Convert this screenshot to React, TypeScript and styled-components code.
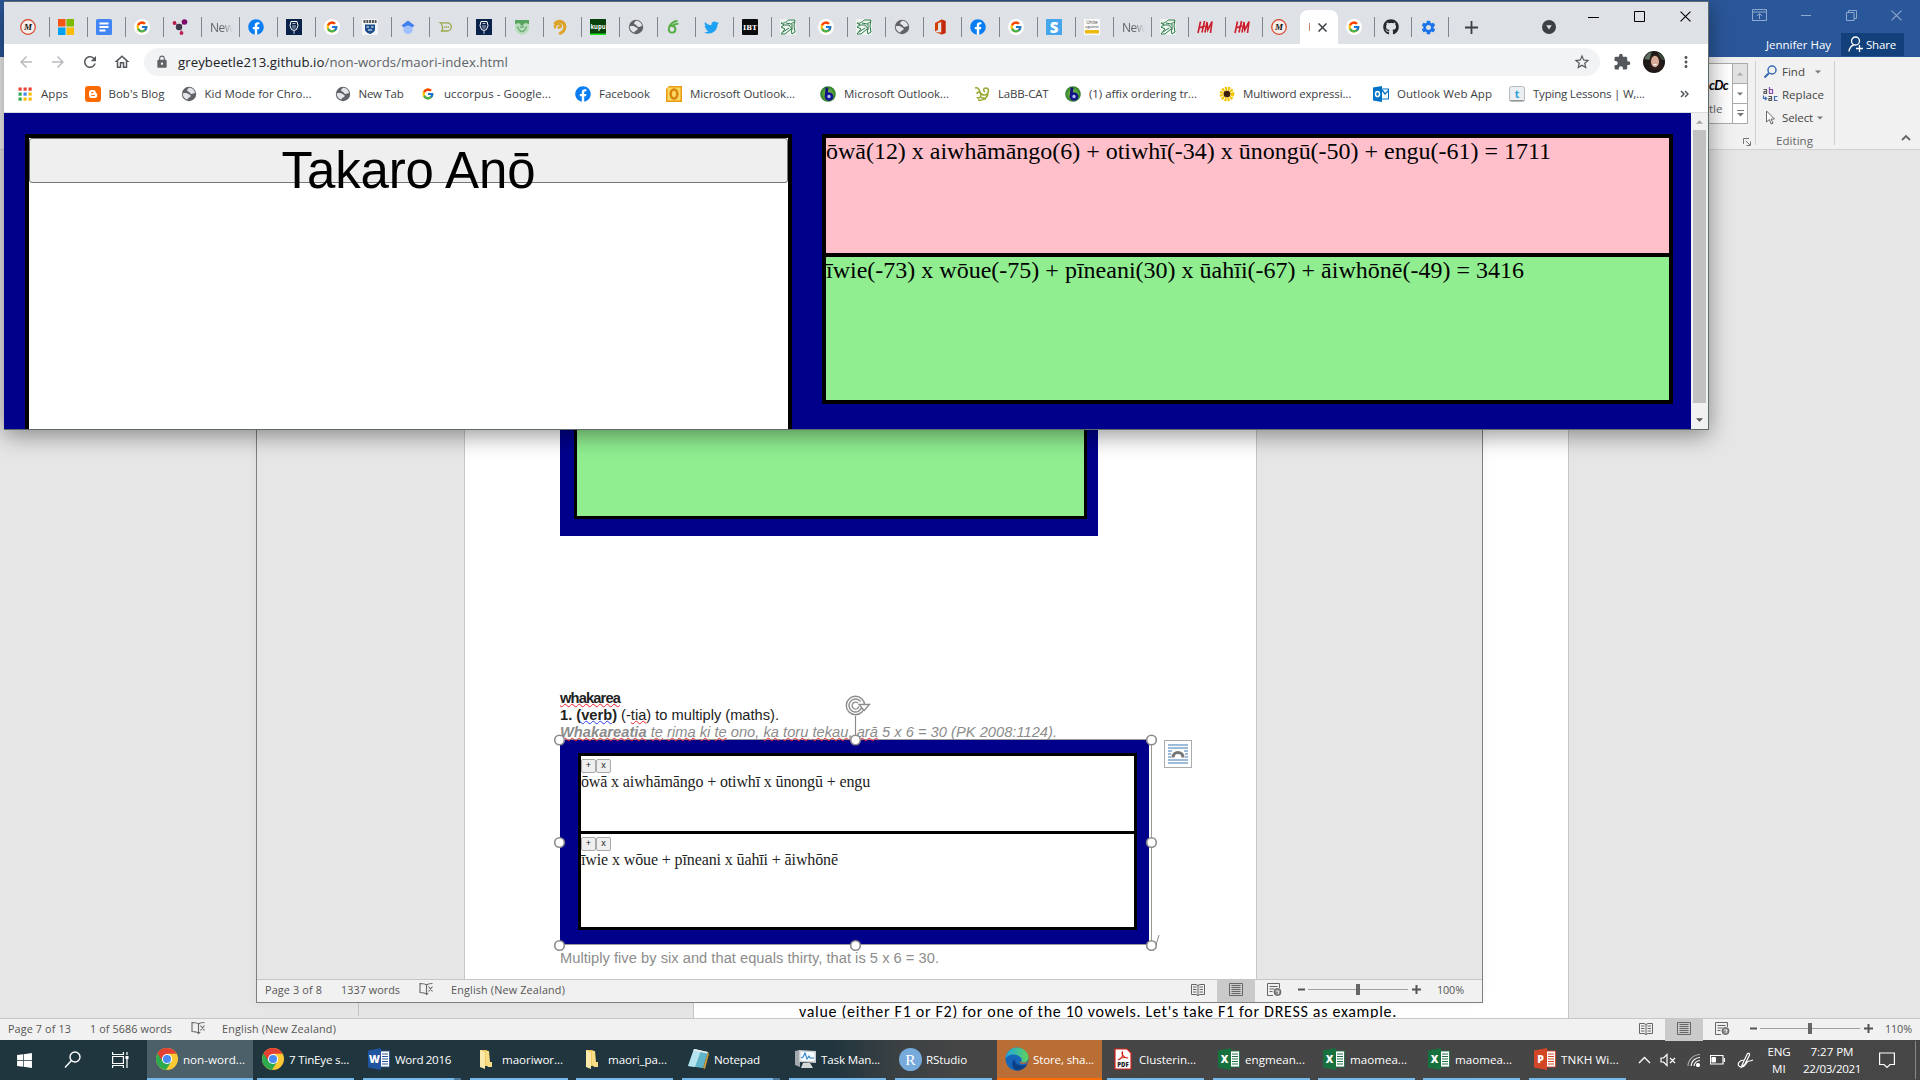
import React, { useLayoutEffect, useRef, useState } from "react";
import styled, { createGlobalStyle } from "styled-components";
import { FcGoogle } from "react-icons/fc";
import { FaFacebook, FaTwitter, FaGithub, FaWindows } from "react-icons/fa";
import {
  MdArrowBack, MdArrowForward, MdRefresh, MdOutlineHome, MdLock,
  MdStarBorder, MdExtension, MdMoreVert, MdSettings,
} from "react-icons/md";

const Global = createGlobalStyle`
  * { box-sizing: border-box; }
  html, body { margin: 0; padding: 0; overflow: hidden; }
  body { font-family: "Segoe UI", "Open Sans", "Noto Sans", sans-serif; }
  svg { display: block; flex: none; }
`;

/* ---------- text that keeps a given advance width ---------- */
const FitSpan = styled.span`
  display: inline-block;
  flex: none;
  white-space: pre;
`;
function Fit({ w, children }: { w: number; children: React.ReactNode }) {
  const ref = useRef<HTMLSpanElement>(null);
  const [ls, setLs] = useState(0);
  useLayoutEffect(() => {
    const el = ref.current;
    if (!el) return;
    const n = (el.textContent || "").length;
    setLs((w - el.getBoundingClientRect().width) / Math.max(1, n));
  }, [w]);
  return <FitSpan ref={ref} style={{ letterSpacing: `${ls}px` }}>{children}</FitSpan>;
}

/* ---------- desktop ---------- */
const Desktop = styled.div`
  position: relative;
  width: 1920px;
  height: 1080px;
  overflow: hidden;
  background: #e6e6e6;
`;
const Row = styled.div`
  display: flex;
  align-items: center;
`;
const Gap = styled.div<{ $w?: number; $h?: number }>`
  flex: none;
  width: ${(p) => p.$w ?? 0}px;
  height: ${(p) => p.$h ?? 0}px;
`;

/* ---------- main Word window ---------- */
const WordWindow = styled.div`
  display: flex;
  flex-direction: column;
  width: 1920px;
  height: 1040px;
`;
const TitleArea = styled.div`
  flex: none;
  height: 57px;
  background: #2a579a;
  display: flex;
  flex-direction: column;
  align-items: flex-end;
`;
const TitleControls = styled.div`
  display: flex;
  align-items: center;
  height: 30px;
  gap: 34px;
  padding-right: 18px;
`;
const AccountRow = styled.div`
  display: flex;
  align-items: center;
  height: 24px;
  margin-top: 2px;
  padding: 0 16px 0 0;
  gap: 10px;
  color: #fff;
  font-size: 11.5px;
`;
const ShareButton = styled.div`
  display: flex;
  align-items: center;
  gap: 3px;
  width: 63px;
  height: 23px;
  padding-left: 7px;
  background: #12407a;
`;
const Ribbon = styled.div`
  flex: none;
  height: 93px;
  background: #f1f1f1;
  border-bottom: 1px solid #d2d2d2;
  display: flex;
  justify-content: flex-end;
  padding-top: 4px;
  color: #444;
  font-size: 11.5px;
`;
const Gallery = styled.div`
  width: 41px;
  height: 61px;
  margin-top: 2px;
  border: 1px solid #ababab;
  border-left: 0;
  background: #fff;
  display: flex;
`;
const GalleryPreview = styled.div`
  width: 25px;
  padding: 10px 0 0 2px;
  color: #000;
  line-height: 22px;
  & > i { display: block; font: italic bold 13px/22px Lato, sans-serif; letter-spacing: -0.6px; }
  & > span { display: block; color: #666; line-height: 26px; }
`;
const GalleryScroll = styled.div`
  width: 15px;
  border-left: 1px solid #ababab;
  display: flex;
  flex-direction: column;
`;
const ScrollCell = styled.div<{ $off?: boolean }>`
  flex: 1;
  display: flex;
  align-items: center;
  justify-content: center;
  background: ${(p) => (p.$off ? "#e1e1e1" : "#fff")};
  border-bottom: 1px solid #ababab;
  &:last-child { border-bottom: 0; }
`;
const GalleryGroup = styled.div`
  display: flex;
  flex-direction: column;
  align-items: flex-end;
  width: 50px;
  padding-right: 7px;
`;
const Launcher = styled.div`
  margin: 14px -3px 0 0;
`;
const EditGroup = styled.div`
  width: 80px;
  height: 84px;
  border-left: 1px solid #d0d0d0;
  border-right: 1px solid #d0d0d0;
  padding: 0 0 0 6px;
`;
const EditItem = styled.div`
  display: flex;
  align-items: center;
  height: 23px;
  gap: 4px;
  padding-bottom: 2px;
`;
const EditLabel = styled.div`
  padding-left: 14px;
  line-height: 22px;
  color: #666;
`;
const RibbonEnd = styled.div`
  width: 85px;
  padding: 73px 0 0 66px;
`;
const WordBody = styled.div`
  flex: 1;
  min-height: 0;
  display: flex;
  background: #e6e6e6;
`;
const RulerEdge = styled.div`
  width: 359px;
  height: 866px;
  border-right: 1px solid #c3c3c3;
`;
const BackPage = styled.div`
  margin-left: 334px;
  width: 876px;
  height: 868px;
  background: #fff;
  border: 1px solid #c6c6c6;
  border-top: 0;
  border-bottom: 0;
  display: flex;
  align-items: flex-end;
  overflow: hidden;
  padding-left: 105px;
  font: 16px/18px Carlito, Lato, sans-serif;
  color: #000;
  & > span { margin-bottom: -3px; }
`;
const StatusBar = styled.div<{ $inner?: boolean }>`
  flex: none;
  display: flex;
  align-items: center;
  height: ${(p) => (p.$inner ? 23 : 22)}px;
  padding-left: 8px;
  background: #f1f1f1;
  border-top: 1px solid #c6c6c6;
  color: #555;
  font-size: 10.8px;
  padding-bottom: ${(p) => (p.$inner ? 4 : 3)}px;
`;
const ViewIcon = styled.div<{ $on?: boolean }>`
  width: 38px;
  height: 22px;
  margin-bottom: -3px;
  padding-bottom: 2px;
  display: flex;
  align-items: center;
  justify-content: center;
  background: ${(p) => (p.$on ? "#cacaca" : "transparent")};
`;
const Spring = styled.div`
  flex: 1;
`;

/* ---------- inner Word window ---------- */
const InnerWindow = styled.div`
  position: absolute;
  left: 256px;
  top: 149px;
  width: 1227px;
  height: 854px;
  border: 1px solid #7f7f7f;
  background: #e6e6e6;
  display: flex;
  flex-direction: column;
  overflow: hidden;
  box-shadow: 0 0 9px rgba(0, 0, 0, 0.05);
`;
const InnerBody = styled.div`
  flex: 1;
  min-height: 0;
  overflow: hidden;
`;
const Page = styled.div`
  margin-left: 207px;
  width: 793px;
  height: 100%;
  background: #fff;
  border: 1px solid #c6c6c6;
  border-top: 0;
  border-bottom: 0;
  padding-left: 95px;
  display: flex;
  flex-direction: column;
  align-items: flex-start;
  font: 14.67px/17px "Liberation Sans", Arial, sans-serif;
  color: #222;
`;
const FirstPicture = styled.div`
  flex: none;
  width: 538px;
  height: 386px;
  background: #00008b;
  padding: 0 11px 17px 14px;
  display: flex;
  & > div {
    flex: 1;
    background: #90ee90;
    border: 3px solid #000;
  }
`;
const DocLine = styled.div<{ $c?: string; $i?: boolean }>`
  position: relative;
  z-index: 1;
  height: 17px;
  white-space: nowrap;
  color: ${(p) => p.$c || "#222"};
  font-style: ${(p) => (p.$i ? "italic" : "normal")};
`;
const Squiggle = styled.span<{ $c?: string }>`
  text-decoration: underline wavy ${(p) => p.$c || "#f0202c"} 1px;
  text-decoration-skip-ink: none;
  text-underline-offset: 0;
`;
const PictureFrame = styled.div`
  position: relative;
  flex: none;
  width: 592px;
  height: 206px;
  margin-top: -2px;
  border: 1px solid #9a9a9a;
  border-left-width: 0;
  padding-right: 2px;
`;
const Picture = styled.div`
  width: 589px;
  height: 204px;
  background: #00008b;
  padding: 13px 12px 15px 18px;
`;
const Sheet = styled.div`
  width: 559px;
  height: 177px;
  border: 3px solid #000;
  background: #fff;
  color: #222;
  font: 16px/18px "Liberation Serif", "Times New Roman", serif;
`;
const SheetCell = styled.div<{ $h: number; $last?: boolean }>`
  height: ${(p) => p.$h}px;
  padding-top: 3px;
  border-bottom: ${(p) => (p.$last ? 0 : 3)}px solid #000;
`;
const TinyButton = styled.span`
  width: 15px;
  height: 14px;
  border: 1px solid #a9a9a9;
  border-radius: 2px;
  background: #efefef;
  font: 9px/11px "Liberation Sans", Arial, sans-serif;
  text-align: center;
`;
const HandleLayer = styled.svg`
  position: absolute;
  left: -8px;
  top: -48px;
  z-index: 2;
  overflow: visible;
`;
const LayoutBadge = styled.div`
  position: absolute;
  left: 604px;
  top: 0;
  width: 28px;
  height: 28px;
  border: 1px solid #ababab;
  background: #fff;
  display: flex;
  align-items: center;
  justify-content: center;
`;

/* ---------- Chrome ---------- */
const ChromeWindow = styled.div`
  position: absolute;
  z-index: 5;
  left: 4px;
  top: 1px;
  width: 1705px;
  height: 429px;
  border: 1px solid #5f6a6a;
  border-left-width: 0;
  background: #fff;
  box-shadow: 0 5px 22px rgba(0, 0, 0, 0.42);
  display: flex;
  flex-direction: column;
  color: #3c4043;
`;
const TabStrip = styled.div`
  flex: none;
  display: flex;
  height: 42px;
  padding: 8px 0 0 8px;
  background: #dee1e6;
`;
const Tab = styled.div<{ $w: number; $sep?: boolean }>`
  flex: none;
  width: ${(p) => p.$w}px;
  height: 34px;
  display: flex;
  align-items: center;
  padding-left: 8px;
  font-size: 12px;
  color: #5f6368;
  background: ${(p) => (p.$sep === false ? "none" : "linear-gradient(#80868b, #80868b) right 7px / 1px 20px no-repeat")};
`;
const NewText = styled.span`
  letter-spacing: -0.5px;
  mask-image: linear-gradient(90deg, #000 50%, transparent 95%);
`;
const ActiveTab = styled.div`
  flex: none;
  width: 38px;
  height: 34px;
  display: flex;
  align-items: center;
  gap: 8px;
  padding-left: 9px;
  background: #fff;
  border-radius: 8px 8px 0 0;
`;
const TitleSliver = styled.span`
  width: 1px;
  height: 8px;
  background: #c98a6a;
`;
const WindowButtons = styled.div`
  display: flex;
  gap: 35px;
  margin: -3px 0 0 32px;
  height: 18px;
  align-items: center;
`;
const Toolbar = styled.div`
  flex: none;
  display: flex;
  align-items: center;
  height: 36px;
  padding-left: 13px;
`;
const NavIcon = styled.span<{ $off?: boolean }>`
  flex: none;
  width: 32px;
  color: ${(p) => (p.$off ? "#b8babd" : "#54585c")};
  & svg { width: 18px; height: 18px; }
`;
const Omnibox = styled.div`
  flex: none;
  display: flex;
  align-items: center;
  width: 1456px;
  height: 28px;
  margin-left: -1px;
  padding: 0 9px 1px 11px;
  border-radius: 14px;
  background: #f1f3f4;
  color: #5f6368;
  font-size: 13.2px;
  & b { font-weight: 400; color: #202124; }
`;
const ToolIcons = styled.div`
  display: flex;
  align-items: center;
  margin-left: 13px;
  gap: 12px;
  color: #54585c;
`;
const Bookmarks = styled.div`
  flex: none;
  display: flex;
  height: 33px;
  padding: 0 0 5px 13px;
  border-bottom: 1px solid #dadce0;
  font-size: 11.5px;
  color: #3c4043;
`;
const Bookmark = styled.div<{ $w: number }>`
  flex: none;
  width: ${(p) => p.$w}px;
  display: flex;
  align-items: center;
  gap: 8px;
`;
const Viewport = styled.div`
  flex: 1;
  min-height: 0;
  display: flex;
  background: #00008b;
  overflow: hidden;
`;
const GamePanel = styled.div`
  flex: none;
  width: 767px;
  height: 400px;
  margin: 21px 0 0 21px;
  border: 4px solid #000;
  background: #fff;
`;
const PlayAgain = styled.div`
  height: 45px;
  border: 1px solid #767676;
  border-radius: 3px;
  background: #efefef;
  color: #000;
  text-align: center;
  font: 51px/63px "Liberation Sans", Arial, sans-serif;
`;
const ScorePanel = styled.div`
  flex: none;
  width: 851px;
  height: 270px;
  margin: 21px 18px 0 30px;
  border: 4px solid #000;
  font: 24px/27px "Liberation Serif", "Times New Roman", serif;
  color: #000;
`;
const Score = styled.div<{ $ok?: boolean }>`
  height: ${(p) => (p.$ok ? 143 : 119)}px;
  background: ${(p) => (p.$ok ? "#90ee90" : "#ffc0cb")};
  border-bottom: ${(p) => (p.$ok ? 0 : 4)}px solid #000;
`;
const ScrollBar = styled.div`
  width: 17px;
  background: #f1f1f1;
  display: flex;
  flex-direction: column;
  align-items: center;
  padding-top: 7px;
`;
const Thumb = styled.div`
  width: 13px;
  height: 273px;
  margin: 6px 0 15px;
  background: #c1c1c1;
`;

/* ---------- taskbar ---------- */
const Taskbar = styled.div`
  display: flex;
  width: 1920px;
  height: 40px;
  background: linear-gradient(90deg, #20363f 0, #20353e 830px, #3c4143 900px, #454545 960px, #464646 1920px);
  color: #fff;
  font-size: 11.6px;
`;
const StartArea = styled.div`
  flex: none;
  display: flex;
  align-items: center;
  width: 147px;
  padding-left: 16px;
  gap: 31px;
`;
const Task = styled.div<{ $w: number; $ml: number; $pad: number; $bg?: string; $line?: string; $stack?: boolean }>`
  flex: none;
  display: flex;
  align-items: center;
  gap: 5px;
  width: ${(p) => p.$w}px;
  height: 40px;
  margin-left: ${(p) => p.$ml}px;
  padding-left: ${(p) => p.$pad}px;
  background: ${(p) => p.$bg || "transparent"};
  border-bottom: 2px solid ${(p) => p.$line || "#76b9ed"};
  ${(p) => p.$stack && "border-image: linear-gradient(90deg, #76b9ed calc(100% - 9px), #4c7ba0 calc(100% - 9px)) 2;"}
  white-space: nowrap;
`;
const TaskIcon = styled.span`
  flex: none;
  width: 22px;
  display: flex;
  justify-content: center;
`;
const Tray = styled.div`
  flex: none;
  display: flex;
  align-items: center;
  margin-left: 12px;
`;
const TrayStack = styled.div<{ $w: number }>`
  width: ${(p) => p.$w}px;
  display: flex;
  flex-direction: column;
  align-items: center;
  line-height: 17px;
  padding-bottom: 1px;
`;
const ShowDesktop = styled.div`
  width: 5px;
  height: 38px;
  margin-left: 20px;
  border-left: 1px solid #888;
`;

/* ---------- icons ---------- */
const Caret = ({ c = "#777", up = false, s = 7 }) => (
  <svg width={s} height={4} viewBox="0 0 8 4"><path d={up ? "M0 4L4 0L8 4z" : "M0 0L4 4L8 0z"} fill={c} /></svg>
);
const GFav = () => (
  <svg width="16" height="16" viewBox="0 0 16 16"><circle cx="8" cy="8" r="8" fill="#fff" /><FcGoogle x="1.5" y="1.5" size={13} /></svg>
);
const FbFav = () => (
  <svg width="16" height="16" viewBox="0 0 16 16"><circle cx="8" cy="8" r="7.5" fill="#fff" /><FaFacebook size={16} color="#0a7df2" /></svg>
);
const Globe = () => (
  <svg width="16" height="16" viewBox="0 0 16 16">
    <circle cx="8" cy="8" r="7.2" fill="#5f6368" />
    <path d="M1.800 7.200c2-.2 4.400-.6 5.200.6s2.800.4 2.600 2.200-2.600 1-3.200 3.600C3.600 13 1.500 10 1.800 7.200zM8.200 1.800c3 0 5.400 2.200 5.800 5.200-2 .4-2.600 1.400-4.200.7s-.8-2-2.600-2.200-1-2.900 1-3.700z" fill="#e4e6ea" />
  </svg>
);
const MStuff = () => (
  <svg width="16" height="16" viewBox="0 0 16 16"><circle cx="8" cy="8" r="7.3" fill="#f4eeea" stroke="#d8442a" strokeWidth="1.2" />
    <text x="8" y="11.2" textAnchor="middle" fontFamily="Liberation Serif" fontStyle="italic" fontWeight="700" fontSize="9" fill="#111">M</text></svg>
);
const MsLogo = () => (
  <svg width="16" height="16"><path d="M0 0h7.500v7.500H0z" fill="#f65314" /><path d="M8.500 0H16v7.500H8.500z" fill="#7cbb00" /><path d="M0 8.500h7.500V16H0z" fill="#00a1f1" /><path d="M8.500 8.500H16V16H8.500z" fill="#ffbb00" /></svg>
);
const Docs = () => (
  <svg width="16" height="16"><rect width="16" height="16" rx="1.5" fill="#4285f4" /><path d="M3.500 4.500h9M3.500 8h9M3.500 11.500h6" stroke="#fff" strokeWidth="1.8" /></svg>
);
const Molecule = () => (
  <svg width="16" height="16"><path d="M3 4l5 4 4-5M8 8l2 6" stroke="#8a4a7a" strokeWidth=".8" fill="none" /><circle cx="7" cy="8" r="3.2" fill="#3c3a4c" /><circle cx="12.5" cy="3" r="2.8" fill="#7c0a6c" /><circle cx="2.5" cy="4" r="1.9" fill="#b51a4a" /><circle cx="9.5" cy="14" r="1.9" fill="#c02050" /></svg>
);
const Crest = () => (
  <svg width="16" height="16"><rect width="16" height="16" fill="#08224a" /><path d="M5 2.500h6l1 4-1.500 4-2.500 1-2.500-1L4 6.500z" fill="none" stroke="#fff" /><path d="M6.500 4.500h3M6 7h4M6.500 9h3M8 11v4" stroke="#cdd5e2" strokeWidth=".9" /></svg>
);
const Shield = () => (
  <svg width="16" height="16"><rect width="16" height="16" fill="#f3f4f6" /><path d="M1.500 2.500h13" stroke="#555" strokeWidth="3" strokeDasharray="2 .8" /><path d="M3 5.500h10v5c0 2-3 4-5 4.500-2-.5-5-2.500-5-4.500z" fill="#1d4f8c" /><path d="M4.500 8h2.500m2 0h2.500M6 11h4" stroke="#fff" strokeWidth="1.2" /></svg>
);
const Scholar = () => (
  <svg width="16" height="16"><circle cx="8" cy="10.5" r="4.6" fill="#a0c3ff" /><path d="M8 1.500L1.500 6.500 4 8.500a5 5 0 0 1 8 0l2.500-2z" fill="#3f7ff0" /></svg>
);
const Chat = () => (
  <svg width="16" height="16" fill="none" stroke="#9aa84a" strokeWidth="1.3"><path d="M2.500 3.800h6.500a4 3.800 0 0 1 0 8.200H3.500l1.200-2.500C4 7.500 4.500 5 2.500 3.800z" /><path d="M6 8h5" strokeDasharray="1.3 .6" /></svg>
);
const GreenShield = () => (
  <svg width="16" height="16"><path d="M1 1h14v8c0 4-4 6-7 7-3-1-7-3-7-7z" fill="#b9dcbc" /><path d="M1 1h14v4l-4-1-3 3-3-3-4 1z" fill="#56a45e" /><path d="M3.500 7.500c1 3 2.500 5 4.500 5s3.500-2 4.500-5M6 8h4" stroke="#6fae76" strokeWidth="1.4" fill="none" /></svg>
);
const Koru = () => (
  <svg width="16" height="16" fill="none" stroke="#dca326" strokeLinecap="round"><path d="M6.500 8.500C9 9 9.600 6 7.500 5.200 5 4.300 2.400 6 3 8.400" strokeWidth="2.4" /><path d="M3.200 4.200C6 .8 12.500 2 12.800 7.500c.1 3.500-2 5.800-4.600 6.800" strokeWidth="3" /></svg>
);
const Kupu = () => (
  <svg width="16" height="16"><rect width="16" height="16" fill="#06420a" /><rect y="14.5" width="16" height="1.5" fill="#1be51b" /><text x="8" y="10" fontSize="7" textLength="15" lengthAdjust="spacingAndGlyphs" fontWeight="700" textAnchor="middle" fontFamily="Open Sans" fill="#fff">kupu</text></svg>
);
const Overleaf = () => (
  <svg width="16" height="16" fill="none" stroke="#52ae43" strokeWidth="1.9"><path d="M11.500 2C8 2 2.800 5 2.800 10.500a3.300 3.300 0 1 0 3.300-3.500C8 5 9.500 4.800 12.500 4.600" /></svg>
);
const Ibt = () => (
  <svg width="16" height="16"><rect width="16" height="16" rx="1" fill="#0c0c0c" /><text x="8" y="11" textAnchor="middle" fontFamily="DejaVu Serif" fontWeight="700" fontSize="7" textLength="14" lengthAdjust="spacingAndGlyphs" fill="#fff">IBT</text></svg>
);
const Uc = () => (
  <svg width="16" height="16"><rect width="16" height="16" fill="#eef3ef" /><path d="M1 4c3 1 5-1 7-3h7l-1 6 1 6-3 2-1-5-6 5H1l4-5-4-2 3-2zM4 6l5 0 3 4M6 4l5 1 3-2M3 13l6-4M12 5v6" fill="none" stroke="#2e7d4a" strokeWidth="1" /></svg>
);
const Office = () => (
  <svg width="16" height="16"><path d="M3 4L9.500.5 13.500 2v12l-4 1.500-6-2.500 6 .5V3L6 4.200v6.600L3 12.500z" fill="#d83b01" /><path d="M9.500.5l4 1.500v12l-4 1.500z" fill="#c2280c" /></svg>
);
const SFav = () => (
  <svg width="16" height="16"><rect width="16" height="16" fill="#45a6ee" /><text x="8" y="13.5" textAnchor="middle" fontFamily="Open Sans" fontWeight="800" fontSize="15" fill="#fff">S</text></svg>
);
const Unite = () => (
  <svg width="16" height="16"><rect width="16" height="16" fill="#fafafa" /><text x="8" y="5" textAnchor="middle" fontFamily="Open Sans" fontSize="4.5" fill="#444">Unite</text><text x="8" y="9.3" textAnchor="middle" fontFamily="Open Sans" fontSize="4" fill="#333">against</text><rect x="1" y="11" width="14" height="3.5" fill="#ecb90f" /></svg>
);
const Hm = () => (
  <svg width="16" height="16" fill="none" stroke="#cc1b2a"><path d="M3.500 2.500L1 14M7.500 2L5 13.500M2 9l6-2M10 3L8 13.500M10 3l.8 8L15 2.500 13.500 14" strokeWidth="1.6" /></svg>
);
const AppsIcon = () => (
  <svg width="16" height="16" viewBox="0 0 16 16">
    {["#ea4335", "#ea4335", "#ea4335", "#34a853", "#4285f4", "#fbbc05", "#34a853", "#fbbc05", "#fbbc05"].map((c, i) => (
      <rect key={i} x={1.5 + (i % 3) * 5} y={1.5 + Math.floor(i / 3) * 5} width="3.2" height="3.2" fill={c} />
    ))}
  </svg>
);
const Blogger = () => (
  <svg width="16" height="16"><rect width="16" height="16" rx="3" fill="#ff6a00" /><path d="M4 6.500A2.500 2.500 0 0 1 6.500 4h1.800a2.500 2.500 0 0 1 2.500 2.500q0 .8.7.8.7 0 .7.9v1.300A2.500 2.500 0 0 1 9.700 12H6.500A2.500 2.500 0 0 1 4 9.500z" fill="#fff" /><path d="M6.300 6.600h2M6.300 9.500h3.500" stroke="#ff6a00" strokeWidth="1.2" /></svg>
);
const OldOutlook = () => (
  <svg width="16" height="16"><path d="M0 3l3-3h13v16H0z" fill="#e89a13" /><rect x="1.5" y="1.5" width="13" height="13" fill="#fbd864" /><ellipse cx="8" cy="8" rx="3.3" ry="4.5" fill="none" stroke="#d9850b" strokeWidth="2.6" /></svg>
);
const BFav = () => (
  <svg width="16" height="16"><defs><radialGradient id="bg"><stop offset="0" stopColor="#9be04a" /><stop offset="1" stopColor="#2b7a2c" /></radialGradient></defs><circle cx="8" cy="8" r="7.8" fill="url(#bg)" /><path d="M7 1.500L6 11" stroke="#14147c" strokeWidth="2.8" /><circle cx="9" cy="10.5" r="3" fill="#a9c7f0" stroke="#14148c" strokeWidth="2.6" /></svg>
);
const Labb = () => (
  <svg width="16" height="16" fill="none" stroke="#9aa832" strokeWidth="1.6"><path d="M1 2c3-1 4 1 5 4s5 4 7 2 2-6-1-6-3 3-1 4M3 8c0-3 4-2 4 1s-3 4-4 2M4 14c5 1 9-2 10-6M7 12c2-1 3 1 5 1" /></svg>
);
const Sunflower = () => (
  <svg width="16" height="16"><circle cx="8" cy="8" r="5.3" fill="none" stroke="#f5c400" strokeWidth="4" strokeDasharray="2 .8" /><circle cx="8" cy="8" r="3.3" fill="#3a1e08" /></svg>
);
const Owa = () => (
  <svg width="16" height="16"><rect x="8" y="3" width="7.5" height="10" fill="#fff" stroke="#0072c6" /><path d="M9 4l3 4 4-4" stroke="#0072c6" strokeWidth="1.3" fill="none" /><path d="M0 1.500L9 0v16l-9-1.500z" fill="#0072c6" /><ellipse cx="4.5" cy="8" rx="2" ry="2.6" fill="none" stroke="#fff" strokeWidth="1.5" /></svg>
);
const TypingFav = () => (
  <svg width="16" height="16"><rect x=".5" y=".5" width="15" height="15" rx="2" fill="#eceff1" stroke="#b4b9bd" /><path d="M1 14.500h14" stroke="#999" /><text x="8" y="11.5" textAnchor="middle" fontWeight="700" fontFamily="Open Sans" fontSize="10.5" fill="#2a9fd8">t</text></svg>
);
const Chrome = () => (
  <svg width="22" height="22" viewBox="0 0 22 22"><circle cx="11" cy="11" r="11" fill="#fbc934" /><path d="M11 11L1.500 5.500A11 11 0 0 0 10 21.950L15.300 13.500z" fill="#2da94f" /><path d="M1.500 5.500A11 11 0 0 1 20.600 5.700H11L6.500 13z" fill="#e34133" /><circle cx="11" cy="11" r="5.1" fill="#fff" /><circle cx="11" cy="11" r="4" fill="#4a8af4" /></svg>
);
const OfficeDoc = ({ c, dark, l }: { c: string; dark: string; l: string }) => (
  <svg width="22" height="22" viewBox="0 0 22 22"><rect x="11" y="3" width="10.5" height="16" fill="#fff" stroke={c} strokeWidth=".9" /><path d="M14 6h6M14 8.500h6M14 11h6M14 13.500h6M14 16h6" stroke={c} strokeWidth="1.1" /><path d="M0 2.500L13 0v22L0 19.500z" fill={dark} /><text x="6.5" y="15" textAnchor="middle" fontFamily="Open Sans" fontWeight="800" fontSize="10.5" fill="#fff">{l}</text></svg>
);
const Folder = () => (
  <svg width="22" height="22"><path d="M5 2h6l2 1v12l4 3H7z" fill="#f3c95c" /><path d="M11 3h3l1 11h2v5h-4l-2-3z" fill="#f8dc86" /><path d="M5 2l5 2v17l-5-2z" fill="#fbe9ab" /></svg>
);
const Notepad = () => (
  <svg width="22" height="22"><path d="M7 1l14 3-5 16L1 18z" fill="#5fb4ca" /><path d="M7 1l7 1.500L8 19l-7-1z" fill="#b6e3ee" /><path d="M7 1l14 3-.5 1.500L6.500 2.500z" fill="#eee" /><path d="M21 4l-5 16 2 1 4-15z" fill="#c79b3b" /></svg>
);
const TaskMgr = () => (
  <svg width="22" height="22"><path d="M1 3l5-1v17l-5-2z" fill="#a3aaad" /><path d="M5 2l17 1v12L5 14z" fill="#c9cdcf" /><path d="M6.500 3.500l14 .8v9l-14-.6z" fill="#f7fbff" /><path d="M7 10l2-1 2-4 2 6 2-3 1 2 4 0" stroke="#2f86c9" fill="none" strokeWidth="1.1" /><path d="M9 15h7l3 5H7z" fill="#d6d9da" /></svg>
);
const RIcon = () => (
  <svg width="23" height="23"><circle cx="11.5" cy="11.5" r="11.5" fill="#75aadb" /><text x="11.5" y="17" textAnchor="middle" fontFamily="Liberation Serif" fontSize="15.5" fill="#fff">R</text></svg>
);
const Edge = () => (
  <svg width="24" height="24"><defs><linearGradient id="eg" x1="0" x2="1"><stop offset="0" stopColor="#1fa6e0" /><stop offset="1" stopColor="#5fd35b" /></linearGradient></defs><circle cx="12" cy="12" r="11.5" fill="#1566b8" /><path d="M.5 12C1 5 6 .5 12 .5S23.500 5 23.500 10.500c0 4-4 5.500-7.500 5 .8-1 1-2.500.4-4C15 7.500 4 5 .5 12z" fill="url(#eg)" /><path d="M10 12c-1 5 4 8 12 5.500C20 21 16 23.500 12 23.500 6 22 6 14 10 12z" fill="#0c3f86" /><path d="M23.500 14c-1 2.500-4.500 3.500-7.500 2.600-1.500-.6-1.800-1.500-1-2.400 1.500 1.600 5.500 2 8.500-.2z" fill="#b96e35" /></svg>
);
const Pdf = () => (
  <svg width="18" height="22"><path d="M1 1h12l4 4v16H1z" fill="#fff" stroke="#d3221c" strokeWidth="1.2" /><path d="M4 12c4-1.500 5-5 4.500-8-1.500 1.500 1 6 5.500 6-4-1-8 0-10 2z" fill="none" stroke="#d3221c" strokeWidth="1.1" /><text x="9" y="19" textAnchor="middle" fontFamily="Open Sans" fontWeight="800" fontSize="6" fill="#222">PDF</text></svg>
);
const Proof = () => (
  <svg width="15" height="14" fill="none" stroke="#666"><path d="M7.500 3C6 1.500 3.500 1.500 1 1.500v9c2.500 0 5 0 6.500 2 .5-.6 1-1 1.800-1.300M7.500 3v9.500M7.500 3C9 1.500 11 1.500 13.500 1.500M9.500 4.500l4 5M13.500 4.500l-4 5" strokeWidth="1.1" /></svg>
);
const ReadIcon = () => (
  <svg width="14" height="13" fill="none" stroke="#666"><path d="M.5 1.500h4.500l2 1 2-1h4.500v10H9l-2 1-2-1H.5zM7 2.500v10" /><path d="M2 4h3.500M2 6.500h3.500M2 9h3.500M8.500 4H12M8.500 6.500H12M8.500 9H12" /></svg>
);
const PrintIcon = () => (
  <svg width="14" height="13" fill="none" stroke="#666"><path d="M.5.5h13v12H.5zM2.500 2.500h9M2.500 4.500h9M2.500 6.500h9M2.500 8.500h9M2.500 10.500h9" /></svg>
);
const WebIcon = () => (
  <svg width="15" height="13" fill="none" stroke="#666"><path d="M6 12.500H.5V.5h12V5M2.500 3.500h8M2.500 6h5M2.500 8.500h3" /><circle cx="10.5" cy="9" r="3.5" fill="#888" /><path d="M9 8h3l-1 3" stroke="#eee" /></svg>
);
const ZoomSlider = () => (
  <svg width="124" height="14"><path d="M0 7.500h7" stroke="#555" strokeWidth="2" /><path d="M10 7.500h100" stroke="#a0a0a0" /><path d="M60 2v11" stroke="#666" strokeWidth="4" /><path d="M114 7.500h9M118.500 3v9" stroke="#555" strokeWidth="2" /></svg>
);
const CloseX = ({ s = 10, c = "#000", w = 1 }) => (
  <svg width={s} height={s} viewBox="0 0 10 10"><path d="M.5.5l9 9M9.500.5l-9 9" stroke={c} strokeWidth={w} /></svg>
);
const Avatar = () => (
  <svg width="22" height="22"><circle cx="11" cy="11" r="11" fill="#1c1817" /><path d="M1.500 8a11 11 0 0 1 7-7l-2 8z" fill="#5f7060" /><path d="M15 1.500a11 11 0 0 1 6.500 8L17 8z" fill="#3c4a3c" /><path d="M6.500 12C5.500 1 17 0 18.500 10l1 8-3 1H8z" fill="#2c1d1b" /><ellipse cx="12" cy="10.5" rx="4" ry="5.800" fill="#d8ab98" /><path d="M10 13c1 1.600 3 1.600 4 0z" fill="#fff" /></svg>
);

const NewTab = () => <NewText>New</NewText>;
const tabs: [React.FC, number][] = [
  [MStuff, 38], [MsLogo, 38], [Docs, 38], [GFav, 38], [Molecule, 38], [NewTab, 38], [FbFav, 38], [Crest, 38],
  [GFav, 38], [Shield, 38], [Scholar, 38], [Chat, 38], [Crest, 38], [GreenShield, 38], [Koru, 38], [Kupu, 38],
  [Globe, 38], [Overleaf, 38], [() => <FaTwitter size={15} color="#1da1f2" />, 38], [Ibt, 38], [Uc, 38], [GFav, 38],
  [Uc, 38], [Globe, 38], [Office, 38], [FbFav, 38], [GFav, 38], [SFav, 38], [Unite, 38], [NewTab, 38], [Uc, 37],
  [Hm, 37], [Hm, 37], [MStuff, 37],
];
const bookmarks: [React.FC, string, number, number][] = [
  [AppsIcon, "Apps", 27, 67.5], [Blogger, "Bob's Blog", 56, 96], [Globe, "Kid Mode for Chro...", 107, 154],
  [Globe, "New Tab", 45, 85.5], [GFav, "uccorpus - Google...", 107, 155], [FbFav, "Facebook", 51, 91],
  [OldOutlook, "Microsoft Outlook...", 105, 154], [BFav, "Microsoft Outlook...", 105, 154], [Labb, "LaBB-CAT", 50.5, 91],
  [BFav, "(1) affix ordering tr...", 108, 154], [Sunflower, "Multiword expressi...", 108, 154],
  [Owa, "Outlook Web App", 95, 136], [TypingFav, "Typing Lessons | W,...", 111.5, 140],
];
const tasks: { icon: React.ReactNode; t: string; tw: number; w: number; ml: number; bg?: string; line?: string; stack?: boolean; pad?: number }[] = [
  { icon: <Chrome />, t: "non-word...", tw: 62, w: 106, ml: 0, bg: "#4b6069", pad: 9 },
  { icon: <Chrome />, t: "7 TinEye s...", tw: 60, w: 97, ml: 4 },
  { icon: <OfficeDoc c="#2b579a" dark="#2053a0" l="W" />, t: "Word 2016", tw: 56, w: 98, ml: 9, stack: true },
  { icon: <Folder />, t: "maoriwor...", tw: 61, w: 98, ml: 9 },
  { icon: <Folder />, t: "maori_pa...", tw: 59, w: 97, ml: 8 },
  { icon: <Notepad />, t: "Notepad", tw: 46, w: 98, ml: 9, stack: true },
  { icon: <TaskMgr />, t: "Task Man...", tw: 59, w: 97, ml: 9 },
  { icon: <RIcon />, t: "RStudio", tw: 41, w: 97, ml: 9, pad: 4 },
  { icon: <Edge />, t: "Store, sha...", tw: 61, w: 105, ml: 5, bg: "#b96e35", line: "#ff6d00", pad: 9 },
  { icon: <Pdf />, t: "Clusterin...", tw: 57, w: 97, ml: 5 },
  { icon: <OfficeDoc c="#217346" dark="#17713f" l="X" />, t: "engmean...", tw: 60, w: 97, ml: 9 },
  { icon: <OfficeDoc c="#217346" dark="#17713f" l="X" />, t: "maomea...", tw: 57, w: 97, ml: 8 },
  { icon: <OfficeDoc c="#217346" dark="#17713f" l="X" />, t: "maomea...", tw: 57, w: 97, ml: 8 },
  { icon: <OfficeDoc c="#d24726" dark="#d24726" l="P" />, t: "TNKH Wi...", tw: 58, w: 97, ml: 9 },
];

function Status({ inner, page, pageW, words, wordsW, zoom }: { inner?: boolean; page: string; pageW: number; words: string; wordsW: number; zoom: string }) {
  return (
    <StatusBar $inner={inner}>
      <Fit w={pageW}>{page}</Fit><Gap $w={19} />
      <Fit w={wordsW}>{words}</Fit><Gap $w={19} />
      <Proof /><Gap $w={inner ? 17 : 16} />
      <Fit w={114}>English (New Zealand)</Fit>
      <Spring />
      <ViewIcon><ReadIcon /></ViewIcon>
      <ViewIcon $on><PrintIcon /></ViewIcon>
      <ViewIcon><WebIcon /></ViewIcon>
      <Gap $w={inner ? 5 : 9} /><ZoomSlider /><Gap $w={inner ? 15 : 11} />
      <Fit w={27}>{zoom}</Fit><Gap $w={inner ? 18 : 8} />
    </StatusBar>
  );
}

const handles = [[7.5, 48], [303.5, 48], [599.5, 48], [7.5, 150.5], [599.5, 150.5], [7.5, 253.5], [303.5, 253.5], [599.5, 253.5]];

function Sums({ h, last, w, text }: { h: number; last?: boolean; w: number; text: string }) {
  return (
    <SheetCell $h={h} $last={last}>
      <Row><TinyButton>+</TinyButton><TinyButton>x</TinyButton></Row>
      <Fit w={w}>{text}</Fit>
    </SheetCell>
  );
}

export default function App() {
  return (
    <Desktop>
      <Global />
      <WordWindow>
        <TitleArea>
          <TitleControls>
            <svg width="15" height="12" fill="none" stroke="#8fa9cf"><path d="M.5.5h14v11H.5zM.5 3h14M7.500 10V5M5 7l2.500-2.500L10 7" /></svg>
            <svg width="11" height="10"><path d="M0 5.500h10" stroke="#8fa9cf" /></svg>
            <svg width="11" height="11" fill="none" stroke="#8fa9cf"><path d="M.5 2.500h7.500v8H.5zM2.500 2.500v-2H10.500v8H8" /></svg>
            <CloseX s={11} c="#8fa9cf" />
          </TitleControls>
          <AccountRow>
            <Fit w={65}>Jennifer Hay</Fit>
            <ShareButton>
              <svg width="15" height="16" fill="none" stroke="#fff" strokeWidth="1.3"><circle cx="7.5" cy="5" r="4" /><path d="M1 15.500c.5-4 3-6.500 5-6.500M8 12.500h7M11.500 9v7" /></svg>
              <Fit w={30}>Share</Fit>
            </ShareButton>
          </AccountRow>
        </TitleArea>
        <Ribbon>
          <GalleryGroup>
            <Gallery>
              <GalleryPreview><i>cDc</i><span>tle</span></GalleryPreview>
              <GalleryScroll>
                <ScrollCell $off><Caret up c="#aaa" s={6} /></ScrollCell>
                <ScrollCell><Caret s={6} /></ScrollCell>
                <ScrollCell><svg width="7" height="7"><path d="M0 .5h7" stroke="#777" /><path d="M0 3l3.500 3.500L7 3z" fill="#777" /></svg></ScrollCell>
              </GalleryScroll>
            </Gallery>
            <Launcher><svg width="8" height="8" fill="none" stroke="#777"><path d="M.5 6V.5H6M3 3l4 4M7.500 3.500v4h-4" /></svg></Launcher>
          </GalleryGroup>
          <EditGroup>
            <EditItem>
              <svg width="16" height="14" fill="none"><circle cx="10" cy="5" r="4" stroke="#3e6db5" strokeWidth="1.5" /><path d="M7 8L2.500 12.500" stroke="#3e6db5" strokeWidth="2.2" /></svg>
              <Fit w={23}>Find</Fit><Gap $w={2} /><Caret s={6} />
            </EditItem>
            <EditItem>
              <svg width="16" height="17" fill="none" strokeWidth="1.2">
                <path d="M1.500 3.500h3v4h-2.500v-2h2.500" stroke="#555" />
                <path d="M7.500 1v6.500h3v-4h-3" stroke="#8a4bb0" />
                <path d="M6.500 10.500h3v4H7v-2h2.500" stroke="#555" />
                <path d="M15.500 10.500h-3v4h3" stroke="#3e6db5" />
                <path d="M1.500 9.500v3h3M3 10.800l1.700 1.700L3 14.200" stroke="#3e6db5" />
              </svg>
              <Fit w={42}>Replace</Fit>
            </EditItem>
            <EditItem>
              <svg width="16" height="15"><path d="M4.500 1v11l2.800-2.500 2 4.500 1.700-.8-2-4.200h3.500z" fill="#fff" stroke="#666" /></svg>
              <Fit w={31}>Select</Fit><Caret s={6} />
            </EditItem>
            <EditLabel><Fit w={37}>Editing</Fit></EditLabel>
          </EditGroup>
          <RibbonEnd><svg width="10" height="7" fill="none" stroke="#666" strokeWidth="1.8"><path d="M1 6l4-4 4 4" /></svg></RibbonEnd>
        </Ribbon>
        <WordBody>
          <RulerEdge />
          <BackPage><Fit w={598}>value (either F1 or F2) for one of the 10 vowels. Let's take F1 for DRESS as example.</Fit></BackPage>
        </WordBody>
        <Status page="Page 7 of 13" pageW={63} words="1 of 5686 words" wordsW={82} zoom="110%" />
      </WordWindow>

      <Taskbar>
        <StartArea>
          <FaWindows size={17} color="#fff" />
          <svg width="17" height="18" fill="none" stroke="#fff" strokeWidth="1.4"><circle cx="11" cy="6" r="5" /><path d="M7.500 9.500L1 16.500" /></svg>
          <svg width="17" height="16" fill="none" stroke="#fff" strokeWidth="1.2"><path d="M.6 4.500h10.800v7H.6zM.6 0v2.500h10.800V0M.6 16v-2.500h10.800V16M15 0v3M15 7v9" /><path d="M13.500 4h3v3h-3z" fill="#fff" stroke="none" /></svg>
        </StartArea>
        {tasks.map((t, i) => (
          <Task key={i} $w={t.w} $ml={t.ml} $pad={t.pad ?? 5} $bg={t.bg} $line={t.line} $stack={t.stack}>
            <TaskIcon>{t.icon}</TaskIcon>
            <Fit w={t.tw}>{t.t}</Fit>
          </Task>
        ))}
        <Tray>
          <svg width="13" height="8" fill="none" stroke="#fff" strokeWidth="1.3"><path d="M1 7l5.500-5.500L12 7" /></svg><Gap $w={9} />
          <svg width="16" height="14" fill="none" stroke="#fff" strokeWidth="1.2"><path d="M1 5v4h2.500L7 12.500v-11L3.500 5zM10 5l5 5M15 5l-5 5" /></svg><Gap $w={11} />
          <svg width="14" height="14" fill="none" stroke="#fff" strokeWidth="1.2"><path d="M1 13A12 12 0 0 1 13 1.500" stroke="#aaa" /><path d="M4 13a9 9 0 0 1 9-8.500M7 13a6 6 0 0 1 6-5.500" /><circle cx="11" cy="12" r="1.5" fill="#fff" /></svg><Gap $w={9} />
          <svg width="15" height="10" fill="none" stroke="#fff"><path d="M.5.5h12.500v8.500H.5zM14.500 3v4" strokeWidth="1.2" /><path d="M2 2.500h3.500v4.500H2z" fill="#fff" /></svg><Gap $w={12} />
          <svg width="17" height="18" fill="none" stroke="#fff" strokeWidth="1.2"><path d="M5 14L10 3.500c1-2 3-1 2.500.5L8 13l-3.500 3zM8 9C1 9-1 15 4 16c5 .5 4-5 8-6 2 0 2 0 4-1" /></svg>
          <Gap $w={10} />
          <TrayStack $w={30}><Fit w={23}>ENG</Fit><Fit w={14}>MI</Fit></TrayStack>
          <Gap $w={8} />
          <TrayStack $w={60}><Fit w={43}>7:27 PM</Fit><Fit w={58}>22/03/2021</Fit></TrayStack>
          <Gap $w={17} />
          <svg width="16" height="17" fill="none" stroke="#fff" strokeWidth="1.2"><path d="M.6 1h14.800v11.500h-4.400L8 15.500 5 12.500H.6z" /></svg>
          <ShowDesktop />
        </Tray>
      </Taskbar>

      <InnerWindow>
        <InnerBody>
          <Page>
            <FirstPicture><div /></FirstPicture>
            <Gap $h={154} />
            <DocLine><b><Fit w={60}><Squiggle>whakarea</Squiggle></Fit></b></DocLine>
            <DocLine><Fit w={219}><b>1. (<Squiggle $c="#2a3cf0">verb</Squiggle>)</b> (-<Squiggle>tia</Squiggle>) to multiply (maths).</Fit></DocLine>
            <DocLine $i $c="#8c8c8c"><Fit w={497}><b><Squiggle>Whakareatia</Squiggle></b> <Squiggle>te</Squiggle> <Squiggle>rima</Squiggle> <Squiggle>ki</Squiggle> <Squiggle>te</Squiggle> ono, <Squiggle>ka</Squiggle> <Squiggle>toru</Squiggle> <Squiggle>tekau</Squiggle>, <Squiggle>arā</Squiggle> 5 x 6 = 30 (PK 2008:1124).</Fit></DocLine>
            <PictureFrame>
              <Picture>
                <Sheet>
                  <Sums h={78} w={289} text="ōwā x aiwhāmāngo + otiwhī x ūnongū + engu" />
                  <Sums h={93} last w={257} text="īwie x wōue + pīneani x ūahīi + āiwhōnē" />
                </Sheet>
              </Picture>
              <HandleLayer width="612" height="264" fill="#fff" stroke="#8b8b8b" strokeWidth="1.6">
                <path d="M303.500 24v20" strokeWidth="1.2" />
                {handles.map(([x, y], i) => <circle key={i} cx={x} cy={y} r="4.8" />)}
                <circle cx="303.5" cy="13.5" r="9.2" fill="#fff" strokeWidth="1.4" />
                <path d="M309.800 15a6.500 6.500 0 1 1-1.200-5.500" fill="none" strokeWidth="1.4" />
                <path d="M307 14.500a3.500 3.500 0 1 1-1-3.500" fill="none" strokeWidth="1.3" />
                <path d="M307 12.500h10.500l-5.300 6z" fill="#fff" strokeWidth="1.3" />
                <path d="M604 253l3-10" strokeWidth="1" />
              </HandleLayer>
              <LayoutBadge>
                <svg width="20" height="20" fill="none" stroke="#3e78b4" strokeWidth="1.2"><path d="M0 1h20M0 4h20M0 7h4M16 7h4M0 10h3M17 10h3M0 13h3M17 13h3M0 16h20M0 19h20" /><path d="M5 13.500a5 5 0 0 1 10 0" stroke="#777" strokeWidth="3.2" /></svg>
              </LayoutBadge>
            </PictureFrame>
            <Gap $h={5} />
            <DocLine $c="#8c8c8c"><Fit w={379}>Multiply five by six and that equals thirty, that is 5 x 6 = 30.</Fit></DocLine>
          </Page>
        </InnerBody>
        <Status inner page="Page 3 of 8" pageW={57} words="1337 words" wordsW={59} zoom="100%" />
      </InnerWindow>

      <ChromeWindow>
        <TabStrip>
          {tabs.map(([Icon, w], i) => <Tab key={i} $w={w} $sep={i !== tabs.length - 1}><Icon /></Tab>)}
          <ActiveTab><TitleSliver /><CloseX s={9} c="#3c4043" w={1.7} /></ActiveTab>
          <Tab $w={37}><GFav /></Tab>
          <Tab $w={37}><FaGithub size={16} color="#24292e" /></Tab>
          <Tab $w={37}><MdSettings size={17} color="#1a73e8" /></Tab>
          <Gap $w={16} />
          <Row><svg width="13" height="13"><path d="M0 6.500h13M6.500 0v13" stroke="#3c4043" strokeWidth="1.8" /></svg></Row>
          <Gap $w={64} />
          <Row><svg width="14" height="14"><circle cx="7" cy="7" r="7" fill="#3c4043" /><path d="M4.200 5.200h5.600L7 9.500z" fill="#dee1e6" /></svg></Row>
          <WindowButtons>
            <svg width="11" height="11"><path d="M0 6.500h11" stroke="#000" /></svg>
            <svg width="11" height="11"><path d="M.5.5h10v10H.5z" fill="none" stroke="#000" /></svg>
            <CloseX s={11} />
          </WindowButtons>
        </TabStrip>
        <Toolbar>
          <NavIcon $off><MdArrowBack /></NavIcon><NavIcon $off><MdArrowForward /></NavIcon>
          <NavIcon><MdRefresh /></NavIcon><NavIcon><MdOutlineHome /></NavIcon>
          <Omnibox>
            <MdLock size={14} color="#5f6368" /><Gap $w={9} />
            <Fit w={330}><b>greybeetle213.github.io</b>/non-words/maori-index.html</Fit>
            <Spring /><MdStarBorder size={18} color="#54585c" />
          </Omnibox>
          <ToolIcons><MdExtension size={18} /><Avatar /><MdMoreVert size={18} /></ToolIcons>
        </Toolbar>
        <Bookmarks>
          {bookmarks.map(([Icon, t, tw, w], i) => (
            <Bookmark key={i} $w={w}><Icon /><Fit w={tw}>{t}</Fit></Bookmark>
          ))}
          <Spring />
          <Row><svg width="9" height="8" fill="none" stroke="#54585c" strokeWidth="1.5"><path d="M1 1l3 3-3 3M5 1l3 3-3 3" /></svg></Row>
          <Gap $w={19} />
        </Bookmarks>
        <Viewport>
          <GamePanel><PlayAgain><Fit w={254}>Takaro Anō</Fit></PlayAgain></GamePanel>
          <ScorePanel>
            <Score><Fit w={725}>ōwā(12) x aiwhāmāngo(6) + otiwhī(-34) x ūnongū(-50) + engu(-61) = 1711</Fit></Score>
            <Score $ok><Fit w={698}>īwie(-73) x wōue(-75) + pīneani(30) x ūahīi(-67) + āiwhōnē(-49) = 3416</Fit></Score>
          </ScorePanel>
          <ScrollBar><Caret up c="#a3a3a3" /><Thumb /><Caret c="#505050" /></ScrollBar>
        </Viewport>
      </ChromeWindow>
    </Desktop>
  );
}
